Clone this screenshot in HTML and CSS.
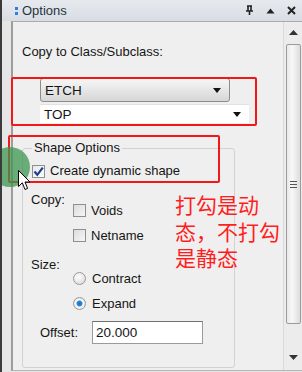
FILE: index.html
```html
<!DOCTYPE html>
<html>
<head>
    <title>Options</title>
    <link rel="stylesheet" href="styles.css">
</head>
<body>
    <div class="panel">
        <div class="titlebar">
            <span class="grip"><i></i><i></i></span>
            <span class="title">Options</span>
            <span class="title-icons">
                <svg width="9" height="11" viewBox="0 0 9 11"><path d="M2 1h5M3 1v5M6 1v5M1 6h7M4.5 6v4" stroke="#222" stroke-width="1.6" fill="none"/></svg>
                <svg width="9" height="6" viewBox="0 0 9 6"><path d="M4.5 0.5L8.5 5.5H0.5Z" fill="#222"/></svg>
                <svg width="9" height="9" viewBox="0 0 9 9"><path d="M1 1L8 8M8 1L1 8" stroke="#222" stroke-width="2"/></svg>
            </span>
        </div>
        <div class="frame">
            <div class="content">
                <div class="label">Copy to Class/Subclass:</div>
                <div class="combo combo-etch"><span>ETCH</span><i class="arrow"></i></div>
                <div class="combo combo-top"><span>TOP</span><i class="arrow"></i></div>

                <fieldset class="group">
                    <legend>Shape Options</legend>
                    <div class="check-row">
                        <span class="box checked">
                            <svg width="11" height="11" viewBox="0 0 11 11"><path d="M1.5 5.5L4.3 8.8L9.8 1.6" stroke="#1b3f8f" stroke-width="2.2" fill="none"/></svg>
                        </span>
                        Create dynamic shape
                    </div>

                    <div class="section section-copy">
                        <div class="section-label">Copy:</div>
                        <div class="options">
                            <div class="option"><span class="box"></span>Voids</div>
                            <div class="option"><span class="box"></span>Netname</div>
                        </div>
                    </div>

                    <div class="section section-size">
                        <div class="section-label">Size:</div>
                        <div class="options">
                            <div class="option"><span class="radio"></span>Contract</div>
                            <div class="option"><span class="radio on"></span>Expand</div>
                        </div>
                    </div>

                    <div class="offset-row">
                        <span class="offset-label">Offset:</span>
                        <div class="textbox">20.000</div>
                    </div>
                </fieldset>
            </div>
            <div class="scrollbar">
                <div class="sb-arrow">
                    <svg width="9" height="5" viewBox="0 0 9 5"><path d="M4.5 0L9 5H0Z" fill="#333"/></svg>
                </div>
                <div class="thumb"><span class="thumb-grip"><i></i><i></i><i></i></span></div>
                <div class="sb-arrow sb-down">
                    <svg width="9" height="5" viewBox="0 0 9 5"><path d="M0 0H9L4.5 5Z" fill="#333"/></svg>
                </div>
            </div>
        </div>

        <!-- annotations drawn over the screenshot -->
        <div class="mark mark-combo"></div>
        <div class="mark mark-shape"></div>
        <div class="note">打勾是动<br>态，不打勾<br>是静态</div>
        <div class="click-spot"></div>
        <svg class="cursor" width="13" height="21" viewBox="0 0 13 21">
            <path d="M0.5 0.5V16.5L4.3 12.8L7 19.5L9.6 18.4L7 12H12Z" fill="#fff" stroke="#000" stroke-width="1"/>
        </svg>
    </div>
</body>
</html>
```

FILE: styles.css
```css
body {
    margin: 0;
    font-family: "Liberation Sans", Arial, sans-serif;
    font-size: 13px;
    color: #151515;
    background-color: #e4e4e4;
}
.panel {
    position: relative;
    width: 302px;
    height: 372px;
    overflow: hidden;
    background-color: #e6e6e6;
    border-left: 2px solid #3a3a3a;
    box-sizing: border-box;
}

/* title bar */
.titlebar {
    height: 21px;
    display: flex;
    align-items: center;
    padding-left: 13px;
    background: linear-gradient(#e6eaef, #d8dde4);
}
.grip {
    display: flex;
    flex-direction: column;
    gap: 2px;
    margin-right: 4px;
}
.grip i {
    display: block;
    width: 3px;
    height: 3px;
    background-color: #2f7fd8;
}
.title {
    color: #28323c;
    font-size: 13px;
}
.title-icons {
    margin-left: auto;
    display: flex;
    align-items: center;
    gap: 12px;
    padding-right: 6px;
}

/* frame with content and scrollbar */
.frame {
    display: flex;
    margin-left: 9px;
    height: 348px;
    border-left: 2px solid #9d9d9d;
    border-top: 1px solid #a9a9a9;
    border-bottom: 1px solid #b5b5b5;
}
.content {
    flex: 1;
    background-color: #efefef;
    padding: 22px 0 0 9px;
}
.label {
    line-height: 16px;
}

.combo {
    position: relative;
    margin-left: 18px;
    display: flex;
    align-items: center;
    padding-left: 4px;
    box-sizing: border-box;
    font-size: 13.5px;
}
.combo-etch {
    margin-top: 18px;
    width: 190px;
    height: 24px;
    border: 1px solid #8c8c8c;
    border-radius: 3px;
    background: linear-gradient(#f7f7f7, #e6e6e6 50%, #d6d6d6);
}
.combo-top {
    margin-top: 2px;
    width: 209px;
    height: 19px;
    background-color: #fff;
    border-top: 1px solid #e2e2e2;
}
.arrow {
    position: absolute;
    right: 8px;
    top: 50%;
    margin-top: -2px;
    width: 0;
    height: 0;
    border-left: 4px solid transparent;
    border-right: 4px solid transparent;
    border-top: 5px solid #111;
}

/* group box */
.group {
    margin: 17px 0 0 0;
    padding: 0;
    width: 213px;
    height: 228px;
    box-sizing: border-box;
    border: 1px solid #d2d2d2;
    border-radius: 3px;
}
.group legend {
    margin-left: 9px;
    padding: 0 2px;
    line-height: 16px;
}
.check-row {
    display: flex;
    align-items: center;
    gap: 5px;
    margin-top: 7px;
    padding-left: 9px;
    line-height: 16px;
}
.box {
    width: 13px;
    height: 13px;
    box-sizing: border-box;
    border: 1px solid #8f8f8f;
    background: linear-gradient(135deg, #dcdcdc, #f6f6f6);
    display: flex;
    align-items: center;
    justify-content: center;
}
.box.checked {
    background: linear-gradient(135deg, #e4e8ee, #ffffff);
}

.section {
    display: grid;
    grid-template-columns: 42px 1fr;
    padding-left: 8px;
}
.section-label {
    line-height: 16px;
}
.options {
    justify-self: start;
}
.section-copy {
    margin-top: 13px;
}
.section-copy .options {
    margin-top: 6px;
}
.section-size {
    margin-top: 9px;
}
.section-size .options {
    margin-top: 9px;
}
.option {
    height: 25px;
    display: flex;
    align-items: center;
    gap: 5px;
}
.radio {
    width: 13px;
    height: 13px;
    box-sizing: border-box;
    border-radius: 50%;
    border: 1px solid #9a9a9a;
    background: radial-gradient(circle at 40% 35%, #ffffff, #d4d4d4);
    margin-right: 1px;
}
.radio.on {
    background: radial-gradient(circle, #1f6fc0 0, #2b86d8 2.5px, #ffffff 3.5px, #dcdcdc 6px);
}

.offset-row {
    display: flex;
    align-items: center;
    margin-top: 5px;
    padding-left: 17px;
}
.offset-label {
    width: 52px;
}
.textbox {
    width: 111px;
    height: 23px;
    box-sizing: border-box;
    border: 1px solid #9a9a9a;
    border-top-color: #707070;
    background-color: #fff;
    padding-left: 3px;
    font-size: 13.5px;
    line-height: 21px;
}

/* scrollbar */
.scrollbar {
    width: 18px;
    background-color: #ececec;
    border-left: 1px solid #d9d9d9;
    display: flex;
    flex-direction: column;
    align-items: center;
}
.sb-arrow {
    height: 20px;
    display: flex;
    align-items: center;
    justify-content: center;
}
.thumb {
    margin-top: 2px;
    width: 15px;
    height: 280px;
    box-sizing: border-box;
    border: 1px solid #9b9b9b;
    border-radius: 2px;
    background: linear-gradient(90deg, #e9e9e9, #f8f8f8 40%, #dcdcdc);
    display: flex;
    align-items: center;
    justify-content: center;
}
.thumb-grip {
    display: flex;
    flex-direction: column;
    gap: 2px;
}
.thumb-grip i {
    display: block;
    width: 7px;
    height: 1px;
    background-color: #555;
}
.sb-down {
    margin-top: auto;
    height: 26px;
}

/* annotations */
.mark {
    position: absolute;
    border: 2px solid #f01818;
    border-radius: 2px;
}
.mark-combo {
    left: 9px;
    top: 77px;
    width: 242px;
    height: 45px;
}
.mark-shape {
    left: 6px;
    top: 135px;
    width: 208px;
    height: 44px;
}
.note {
    position: absolute;
    left: 173px;
    top: 191px;
    font-family: "Noto Sans CJK SC", sans-serif;
    font-size: 21px;
    line-height: 26.5px;
    color: #ff1e1e;
}
.click-spot {
    position: absolute;
    left: -12px;
    top: 147px;
    width: 40px;
    height: 40px;
    border-radius: 50%;
    background-color: rgba(60, 150, 80, 0.75);
}
.cursor {
    position: absolute;
    left: 16px;
    top: 170px;
}
```
